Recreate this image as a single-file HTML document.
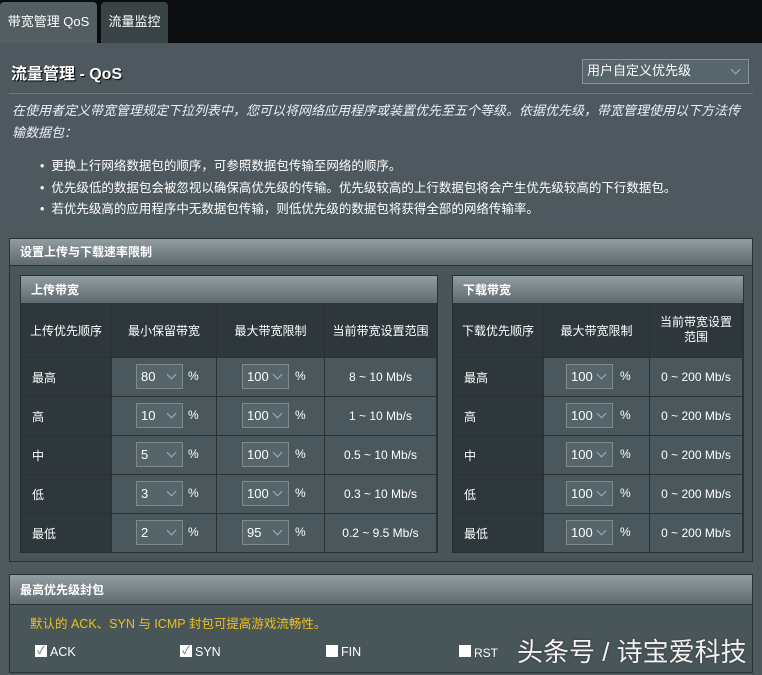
<!DOCTYPE html>
<html><head><meta charset="utf-8"><style>
*{box-sizing:border-box;margin:0;padding:0}
body{width:762px;height:675px;background:#0b0d0e;font-family:"Liberation Sans","Noto Sans CJK SC",sans-serif;color:#fff;position:relative;overflow:hidden;font-size:12px}
.abs{position:absolute}
.tab{position:absolute;top:2px;height:42px;border-radius:4px 4px 0 0;font-size:13px;line-height:40px;text-align:center}
#panel{position:absolute;left:0;top:43px;width:762px;height:632px;background:#4d595e}
.sec{position:absolute;background:#485559;border:1px solid #2a3134}
.hdr{position:absolute;left:0;right:0;top:0;background:linear-gradient(#929da1,#5e6a6f);font-weight:bold;font-size:12px;padding-left:10px;border-bottom:1px solid #2a3134}
.cell{position:absolute;border-right:1px solid #2a3134;border-bottom:1px solid #2a3134;display:flex;align-items:center;justify-content:center;font-size:12px}
.sel{position:absolute;width:47px;height:25px;border:1px solid #7d8a8e;background:#56656a;font-size:13px;line-height:23px;padding-left:4px}
.sel:after{content:"";position:absolute;right:7px;top:6px;width:6px;height:6px;border-right:1px solid #aab;border-bottom:1px solid #aab;transform:rotate(45deg)}
.cb{position:absolute;width:12px;height:12px;background:#fff;font-size:11px;color:#666;line-height:12px;text-align:center}
</style></head><body>
<div class="tab" style="left:0;width:97px;background:#56616a;background:#535e63">带宽管理 QoS</div>
<div class="tab" style="left:101px;width:67px;background:#3a4447">流量监控</div>
<div id="panel"></div>
<div class="abs" style="left:11px;top:60px;font-size:16px;font-weight:bold;text-shadow:1px 1px 1px #000">流量管理 - QoS</div>
<div class="abs" style="left:582px;top:59px;width:167px;height:25px;border:1px solid #869296;background:#56666c;font-size:13px;line-height:22px;padding-left:4px">用户自定义优先级<span style="position:absolute;right:9px;top:6px;width:7px;height:7px;border-right:1px solid #aab;border-bottom:1px solid #aab;transform:rotate(45deg)"></span></div>
<div class="abs" style="left:9px;top:93px;width:744px;height:1px;background:#2a3236;border-bottom:1px solid #6b777b"></div>
<div class="abs" style="left:12px;top:100px;width:735px;font-style:italic;font-size:13px;line-height:22px;color:#eef">在使用者定义带宽管理规定下拉列表中，您可以将网络应用程序或装置优先至五个等级。依据优先级，带宽管理使用以下方法传输数据包：</div>
<div class="abs" style="left:40px;top:156px;font-size:12.5px;line-height:21.5px">
<div>•&nbsp;&nbsp;更换上行网络数据包的顺序，可参照数据包传输至网络的顺序。</div>
<div>•&nbsp;&nbsp;优先级低的数据包会被忽视以确保高优先级的传输。优先级较高的上行数据包将会产生优先级较高的下行数据包。</div>
<div>•&nbsp;&nbsp;若优先级高的应用程序中无数据包传输，则低优先级的数据包将获得全部的网络传输率。</div>
</div>

<div class="sec" style="left:9px;top:238px;width:744px;height:324px">
<div class="hdr" style="height:27px;line-height:27px">设置上传与下载速率限制</div>
</div>
<div class="sec" style="left:20px;top:275px;width:418px;height:278px;background:#2e383c">
<div class="hdr" style="height:28px;line-height:28px">上传带宽</div>
</div>
<div class="sec" style="left:452px;top:275px;width:292px;height:278px;background:#2e383c">
<div class="hdr" style="height:28px;line-height:28px">下载带宽</div>
</div>
<div id="tbls"></div>
<script>
var out="";
function cell(x,y,w,h,bg,html,al){out+='<div class="cell" style="left:'+x+'px;top:'+y+'px;width:'+w+'px;height:'+h+'px;background:'+bg+';'+(al?'justify-content:flex-start;padding-left:11px;':'')+'">'+html+'</div>';}
var names=["最高","高","中","低","最低"];
var mins=["80","10","5","3","2"],maxs=["100","100","100","100","95"];
var rng=["8 ~ 10 Mb/s","1 ~ 10 Mb/s","0.5 ~ 10 Mb/s","0.3 ~ 10 Mb/s","0.2 ~ 9.5 Mb/s"];
var hb="#2e373b";
cell(21,303,91,55,hb,"上传优先顺序");cell(112,303,105,55,hb,"最小保留带宽");cell(217,303,108,55,hb,"最大带宽限制");cell(325,303,112,55,hb,"当前带宽设置范围");
cell(453,303,91,55,hb,"下载优先顺序");cell(544,303,106,55,hb,"最大带宽限制");cell(650,303,93,55,hb,'<div style="text-align:center;line-height:15px">当前带宽设置<br>范围</div>');
for(var i=0;i<5;i++){var y=358+i*39;var c="#4a575c";
cell(21,y,91,39,"#2e383c",names[i],1);
cell(112,y,105,39,c,'');cell(217,y,108,39,c,'');cell(325,y,112,39,c,rng[i]);
out+='<div class="sel" style="left:136px;top:'+(y+6)+'px">'+mins[i]+'</div><div class="abs" style="left:188px;top:'+(y+11)+'px">%</div>';
out+='<div class="sel" style="left:242px;top:'+(y+6)+'px">'+maxs[i]+'</div><div class="abs" style="left:295px;top:'+(y+11)+'px">%</div>';
cell(453,y,91,39,"#2e383c",names[i],1);cell(544,y,106,39,c,'');cell(650,y,93,39,c,"0 ~ 200 Mb/s");
out+='<div class="sel" style="left:566px;top:'+(y+6)+'px">100</div><div class="abs" style="left:620px;top:'+(y+11)+'px">%</div>';}
document.getElementById("tbls").innerHTML=out;
</script>

<div class="sec" style="left:9px;top:574px;width:744px;height:99px">
<div class="hdr" style="height:30px;line-height:30px">最高优先级封包</div>
</div>
<div class="abs" style="left:30px;top:613px;color:#f0c020;font-size:12.5px">默认的 ACK、SYN 与 ICMP 封包可提高游戏流畅性。</div>
<div class="cb" style="left:35px;top:645px">✓</div><div class="abs" style="left:50px;top:645px;font-size:12.5px">ACK</div>
<div class="cb" style="left:180px;top:645px">✓</div><div class="abs" style="left:195px;top:645px;font-size:12.5px">SYN</div>
<div class="cb" style="left:326px;top:645px"></div><div class="abs" style="left:341px;top:645px;font-size:12.5px">FIN</div>
<div class="cb" style="left:459px;top:645px"></div><div class="abs" style="left:474px;top:646px;font-size:12px">RST</div>
<div class="abs" style="left:517px;top:637px;font-size:26px;color:#f2f2f2;line-height:30px;text-shadow:0 0 2px #333">头条号 / 诗宝爱科技</div>
</body></html>
